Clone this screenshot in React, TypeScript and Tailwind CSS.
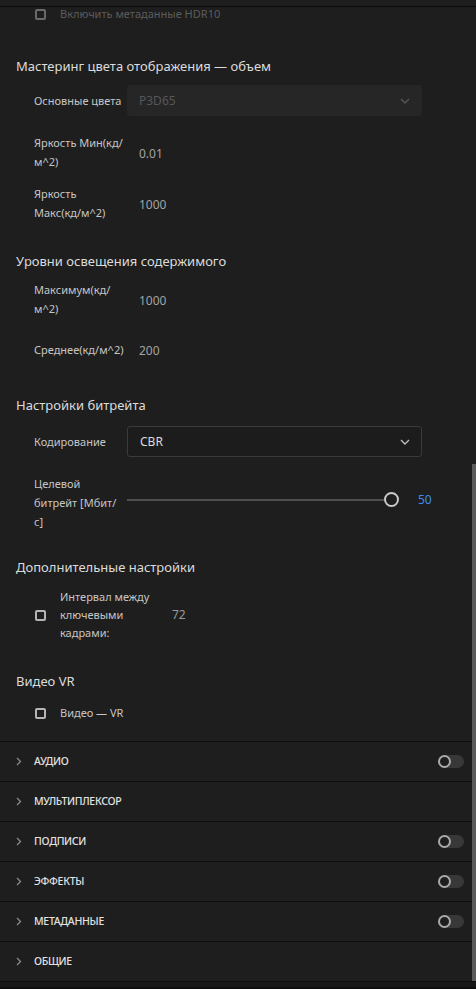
import React from "react";

const font = { fontFamily: "'Noto Sans', 'Open Sans', sans-serif" };

const Chevron = ({ dim = false }: { dim?: boolean }) => (
  <svg width="10" height="6" viewBox="0 0 10 6" fill="none">
    <path d="M1 1l4 4 4-4" stroke={dim ? "#555" : "#bdbdbd"} strokeWidth="1.4" />
  </svg>
);

const Check = ({ disabled = false }: { disabled?: boolean }) => (
  <span
    className={`block w-[11px] h-[11px] rounded-[2px] border-2 ${
      disabled ? "border-[#6a6a6a]" : "border-[#b5b5b5]"
    }`}
  />
);

const Heading = ({ children }: { children: React.ReactNode }) => (
  <h3 className="pl-4 text-[13px] leading-[20px] text-[#dcdcdc]">{children}</h3>
);

const Row = ({
  label,
  children,
  className = "",
}: {
  label: React.ReactNode;
  children?: React.ReactNode;
  className?: string;
}) => (
  <div className={`flex items-center pl-[34px] ${className}`}>
    <div className="w-[90px] whitespace-nowrap text-[11px] leading-[19px] text-[#c6c6c6]">{label}</div>
    <div className="flex-1 ml-[3px] pr-[54px]">{children}</div>
  </div>
);

const Value = ({ v }: { v: string }) => (
  <span className="pl-3 text-[12px] text-[#a3a3a3]">{v}</span>
);

const Toggle = () => (
  <span className="relative block w-[26px] h-[13px] rounded-full bg-[#383838]">
    <span className="absolute left-0 top-0 w-[13px] h-[13px] rounded-full border-2 border-[#a9a9a9] bg-[#1e1e1e]" />
  </span>
);

const sections = [
  { name: "Аудио", toggle: true },
  { name: "Мультиплексор", toggle: false },
  { name: "Подписи", toggle: true },
  { name: "Эффекты", toggle: true },
  { name: "Метаданные", toggle: true },
  { name: "Общие", toggle: false },
];

export default function App() {
  return (
    <div className="relative w-[476px] h-[989px] bg-[#1e1e1e] overflow-hidden" style={font}>
      <div className="h-[7px] border-b border-[#0c0c0c]" />

      <div className="flex items-center gap-[14px] pl-[35px] h-[14px]">
        <Check disabled />
        <span className="text-[11px] text-[#5c5c5c]">Включить метаданные HDR10</span>
      </div>

      <div className="mt-[35px]">
        <Heading>Мастеринг цвета отображения — объем</Heading>
      </div>
      <Row label="Основные цвета" className="mt-[9px]">
        <div className="flex items-center justify-between h-[31px] rounded-[3px] bg-[#262626] pl-3 pr-[12px]">
          <span className="text-[12px] text-[#575757]">P3D65</span>
          <Chevron dim />
        </div>
      </Row>
      <Row
        label={
          <>
            Яркость Мин(кд/
            <br />
            м^2)
          </>
        }
        className="mt-[17px]"
      >
        <Value v="0.01" />
      </Row>
      <Row
        label={
          <>
            Яркость
            <br />
            Макс(кд/м^2)
          </>
        }
        className="mt-[13px]"
      >
        <Value v="1000" />
      </Row>

      <div className="mt-[29px]">
        <Heading>Уровни освещения содержимого</Heading>
      </div>
      <Row
        label={
          <>
            Максимум(кд/
            <br />
            м^2)
          </>
        }
        className="mt-[9px]"
      >
        <Value v="1000" />
      </Row>
      <Row label="Среднее(кд/м^2)" className="mt-[19px]">
        <Value v="200" />
      </Row>

      <div className="mt-[34px]">
        <Heading>Настройки битрейта</Heading>
      </div>
      <Row label="Кодирование" className="mt-[11px]">
        <div className="flex items-center justify-between h-[31px] rounded-[3px] border border-[#3a3a3a] bg-[#1c1c1c] pl-3 pr-[11px]">
          <span className="text-[12px] text-[#dcdcdc]">CBR</span>
          <Chevron />
        </div>
      </Row>
      <div className="flex items-center pl-[34px] mt-[17px]">
        <div className="w-[90px] whitespace-nowrap text-[11px] leading-[19px] text-[#c6c6c6]">
          Целевой
          <br />
          битрейт [Мбит/
          <br />
          с]
        </div>
        <div className="flex-1 ml-[3px] flex items-center pr-[44px] mb-[6px]">
          <div className="flex-1 flex items-center">
            <div className="flex-1 h-[2px] bg-[#4e4e4e]" />
            <span className="block w-[15px] h-[15px] rounded-full border-2 border-[#c9c9c9] bg-[#1e1e1e]" />
          </div>
          <span className="ml-[19px] w-[14px] text-[12px] text-[#3a8ef0]">50</span>
        </div>
      </div>

      <div className="mt-[26px]">
        <Heading>Дополнительные настройки</Heading>
      </div>
      <div className="flex items-center pl-[35px] mt-[11px]">
        <Check />
        <div className="ml-[14px] w-[96px] whitespace-nowrap text-[11px] leading-[18px] text-[#c6c6c6]">
          Интервал между
          <br />
          ключевыми
          <br />
          кадрами:
        </div>
        <span className="ml-[16px] text-[12px] text-[#9a9a9a]">72</span>
      </div>

      <div className="mt-[29px]">
        <Heading>Видео VR</Heading>
      </div>
      <div className="flex items-center gap-[14px] pl-[35px] mt-[13px] h-[18px]">
        <Check />
        <span className="text-[11px] text-[#c6c6c6]">Видео — VR</span>
      </div>

      <div className="mt-[19px] border-t border-[#0e0e0e]">
        {sections.map((s) => (
          <div
            key={s.name}
            className="flex items-center h-[40px] border-b border-[#0e0e0e] pl-[16px] pr-[12px]"
          >
            <svg width="6" height="9" viewBox="0 0 6 9" fill="none">
              <path d="M1 1l3.5 3.5L1 8" stroke="#8a8a8a" strokeWidth="1.3" />
            </svg>
            <span className="ml-[12px] flex-1 text-[10.5px] font-medium uppercase tracking-[-0.3px] text-[#e2e2e2]">
              {s.name}
            </span>
            {s.toggle && <Toggle />}
          </div>
        ))}
      </div>
      <div className="h-[8px] bg-[#181818] border-b-[3px] border-[#0d0d0d]" />

      <div className="absolute right-0 top-[464px] w-[4px] h-[517px] bg-[#5b5b5b]" />
    </div>
  );
}
